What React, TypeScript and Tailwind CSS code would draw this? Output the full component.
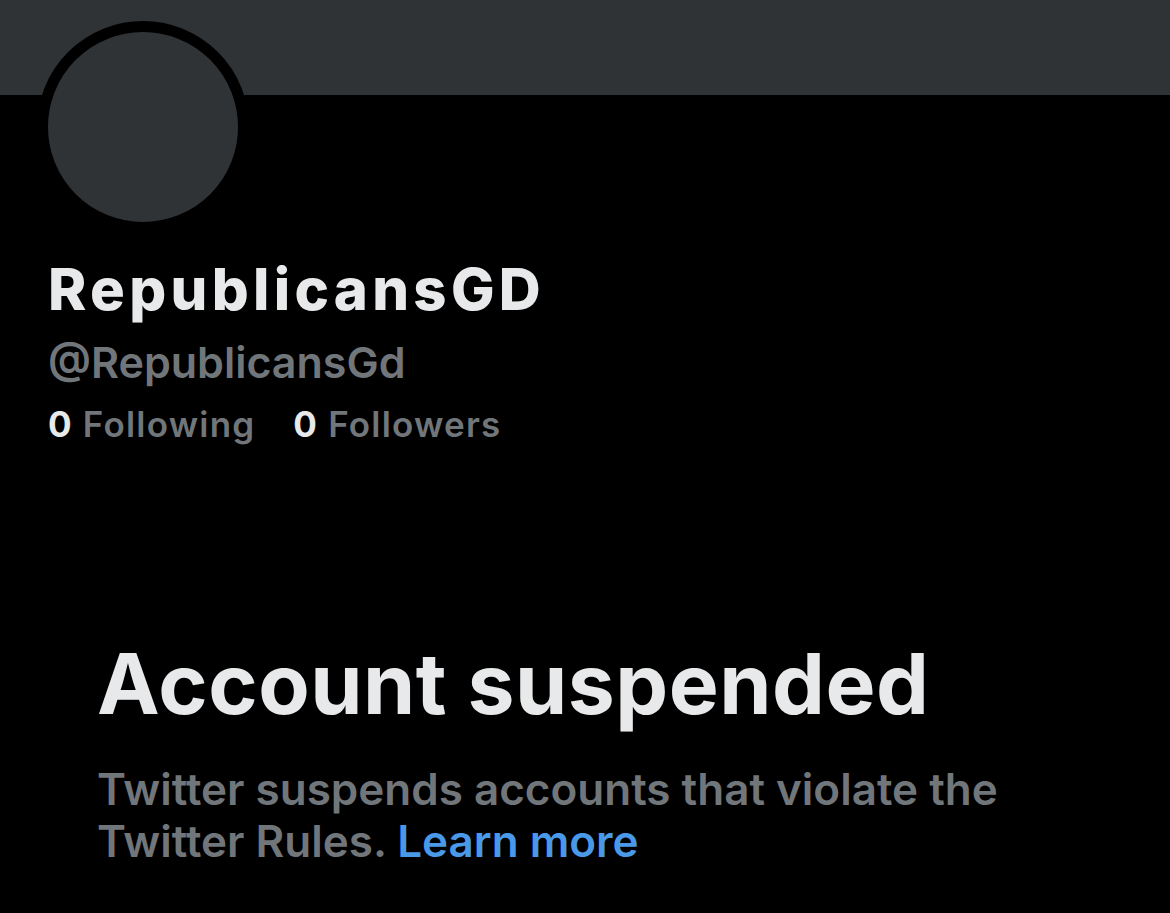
import React from 'react';

export default function App() {
  return (
    <div className="w-[1170px] h-[913px] overflow-hidden bg-black font-['Inter','Liberation_Sans',sans-serif]">
      {/* banner */}
      <div className="h-[95px] bg-[#2f3336]" />

      {/* header */}
      <div className="px-[37px]">
        <div className="-mt-[74px] h-[212px] w-[212px] rounded-full border-[11px] border-black bg-[#303336]" />
      </div>

      <div className="px-[48px] pt-[24px]">
        <div className="text-[58px] leading-[64px] font-extrabold text-[#e7e9ea] tracking-[4.3px]">RepublicansGD</div>
        <div className="mt-[15px] text-[43px] leading-[52px] font-semibold text-[#71767b]">@RepublicansGd</div>
        <div className="mt-[14px] flex gap-[38px] text-[35px] leading-[44px] font-semibold tracking-[1.2px]">
          <span>
            <span className="font-bold text-[#e7e9ea]">0</span>
            <span className="text-[#71767b]"> Following</span>
          </span>
          <span>
            <span className="font-bold text-[#e7e9ea]">0</span>
            <span className="text-[#71767b]"> Followers</span>
          </span>
        </div>
      </div>

      <div className="px-[97px] pt-[190px]">
        <div className="text-[84px] leading-[96px] font-bold text-[#e7e9ea] tracking-[0.5px]">Account suspended</div>
        <p className="mt-[31px] w-[1000px] text-[44px] leading-[52px] font-semibold text-[#71767b]">
          Twitter suspends accounts that violate the<br />
          Twitter Rules. <span className="text-[#4a98e8]">Learn more</span>
        </p>
      </div>
    </div>
  );
}
